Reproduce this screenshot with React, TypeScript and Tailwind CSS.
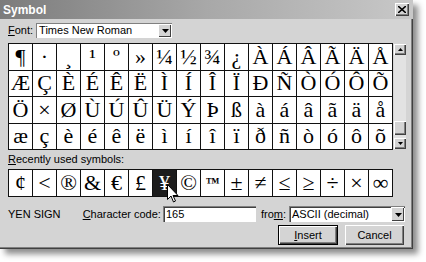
import React from "react";

const rows = [
  ["¶", "·", "¸", "¹", "º", "»", "¼", "½", "¾", "¿", "À", "Á", "Â", "Ã", "Ä", "Å"],
  ["Æ", "Ç", "È", "É", "Ê", "Ë", "Ì", "Í", "Î", "Ï", "Ð", "Ñ", "Ò", "Ó", "Ô", "Õ"],
  ["Ö", "×", "Ø", "Ù", "Ú", "Û", "Ü", "Ý", "Þ", "ß", "à", "á", "â", "ã", "ä", "å"],
  ["æ", "ç", "è", "é", "ê", "ë", "ì", "í", "î", "ï", "ð", "ñ", "ò", "ó", "ô", "õ"],
];

const recent = ["¢", "<", "®", "&", "€", "£", "¥", "©", "™", "±", "≠", "≤", "≥", "÷", "×", "∞"];

function DropArrow() {
  return (
    <span className="flex h-full w-[13px] items-center justify-center border-l border-t border-l-white border-t-white bg-[#d4d4d4] shadow-[inset_-1px_-1px_0_#404040]">
      <svg width="7" height="4" viewBox="0 0 7 4">
        <path d="M0 0h7L3.5 4z" fill="#000" />
      </svg>
    </span>
  );
}

function Raised({ children, className = "" }: { children?: React.ReactNode; className?: string }) {
  return (
    <div
      className={`flex items-center justify-center bg-[#d4d4d4] shadow-[inset_1px_1px_0_#fff,inset_-1px_-1px_0_#404040,inset_-2px_-2px_0_#808080] ${className}`}
    >
      {children}
    </div>
  );
}

export default function App() {
  return (
    <div className="relative h-[262px] w-[426px] overflow-hidden bg-white font-['Liberation_Sans',sans-serif] text-[11px] text-black">
      {/* Window */}
      <div className="flex h-[249px] w-[413px] flex-col bg-[#d4d4d4] shadow-[inset_-1px_-1px_0_#404040,inset_-2px_-2px_0_#808080,5px_5px_6px_rgba(0,0,0,0.45)]">
        {/* Title bar */}
        <div className="flex h-[19px] items-center justify-between bg-gradient-to-r from-[#7c7c7c] via-[#a8a8a8] to-[#c8c8c8] pl-[3px] pr-[4px]">
          <span className="text-[12px] font-bold text-white">Symbol</span>
          <Raised className="h-[13px] w-[14px]">
            <svg width="8" height="7" viewBox="0 0 8 7">
              <path d="M0 0l8 7M8 0L0 7" stroke="#000" strokeWidth="1.6" />
            </svg>
          </Raised>
        </div>

        <div className="flex flex-col px-[8px]">
          {/* Font row */}
          <div className="mt-[4px] flex h-[15px] items-center gap-[3px]">
            <span>
              <span className="underline">F</span>ont:
            </span>
            <div className="flex h-[15px] w-[136px] items-center bg-white shadow-[inset_1px_1px_0_#808080,inset_-1px_-1px_0_#fff]">
              <span className="flex-1 truncate pl-[3px] leading-none">Times New Roman</span>
              <div className="h-[13px] pr-[1px]">
                <DropArrow />
              </div>
            </div>
          </div>

          {/* Symbol grid + scrollbar */}
          <div className="mt-[5px] flex items-start">
            <div className="grid grid-cols-[repeat(16,24px)] border-l border-t border-[#111] bg-white">
              {rows.flat().map((c, i) => (
                <div
                  key={i}
                  className="flex h-[26.5px] items-center justify-center border-b border-r border-[#111] font-['Liberation_Serif',serif] text-[22px] leading-none"
                >
                  {c}
                </div>
              ))}
            </div>
            <div className="ml-[1px] mt-[1px] flex h-[105px] w-[12px] flex-col bg-[#e2e2e2]">
              <Raised className="h-[11px] w-[12px]">
                <svg width="5" height="3" viewBox="0 0 5 3">
                  <path d="M0 3h5L2.5 0z" fill="#000" />
                </svg>
              </Raised>
              <div className="flex-1" />
              <Raised className="h-[14px] w-[12px]" />
              <div className="h-[3px]" />
              <Raised className="h-[11px] w-[12px]">
                <svg width="5" height="3" viewBox="0 0 5 3">
                  <path d="M0 0h5L2.5 3z" fill="#000" />
                </svg>
              </Raised>
            </div>
          </div>

          {/* Recently used */}
          <div className="mt-[4px] leading-none">
            <span className="underline">R</span>ecently used symbols:
          </div>
          <div className="mt-[4px] grid w-fit grid-cols-[repeat(16,24px)] border-l border-t border-[#111] bg-white">
            {recent.map((c, i) => (
              <div
                key={i}
                className={`flex h-[27px] items-center justify-center border-b border-r border-[#111] font-['Liberation_Serif',serif] leading-none ${
                  c === "™" ? "text-[14px] font-bold" : "text-[22px]"
                } ${c === "¥" ? "bg-[#1c1c1c] text-white" : ""}`}
              >
                {c}
              </div>
            ))}
          </div>

          {/* Bottom info */}
          <div className="mt-[9px] flex h-[16px] items-center whitespace-nowrap">
            <span className="flex-1">YEN SIGN</span>
            <span>
              <span className="underline">C</span>haracter code:
            </span>
            <div className="ml-[2px] flex h-[16px] w-[93px] items-center bg-white pl-[3px] shadow-[inset_1px_1px_0_#808080,inset_2px_2px_0_#404040,inset_-1px_-1px_0_#fff]">
              165
            </div>
            <span className="ml-[5px]">
              fro<span className="underline">m</span>:
            </span>
            <div className="ml-[3px] flex h-[16px] w-[116px] items-center bg-white shadow-[inset_1px_1px_0_#808080,inset_2px_2px_0_#404040,inset_-1px_-1px_0_#fff]">
              <span className="flex-1 pl-[3px]">ASCII (decimal)</span>
              <div className="h-[14px] pr-[1px]">
                <DropArrow />
              </div>
            </div>
          </div>

          <div className="mt-[3px] flex justify-end gap-[7px] pr-[1px]">
            <div className="border border-black">
              <Raised className="h-[18px] w-[58px]">
                <span>
                  <span className="underline">I</span>nsert
                </span>
              </Raised>
            </div>
            <Raised className="h-[20px] w-[59px]">Cancel</Raised>
          </div>
        </div>
      </div>

      {/* Mouse cursor over the selected cell */}
      <svg className="absolute left-[167px] top-[184px]" width="12" height="19" viewBox="0 0 12 19">
        <path
          d="M0.5 0.5v15l3.5-3.5 2.5 6 2-1-2.5-5.5h5z"
          fill="#fff"
          stroke="#000"
          strokeWidth="1"
          strokeLinejoin="round"
        />
      </svg>
    </div>
  );
}
